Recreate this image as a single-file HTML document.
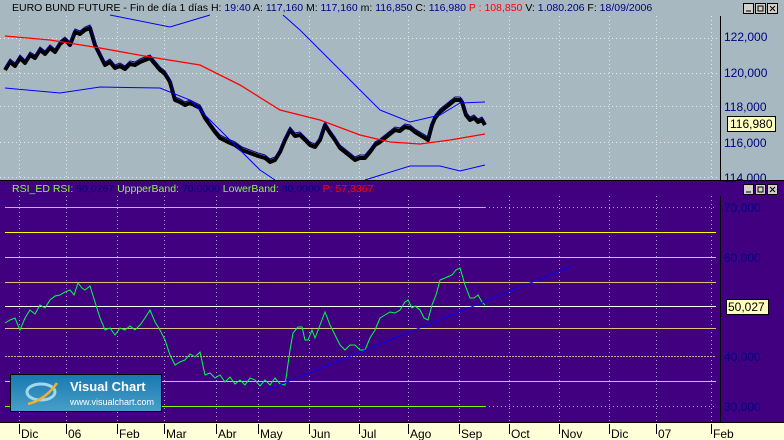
<!DOCTYPE html><html><head><style>
body{margin:0;width:784px;height:440px;overflow:hidden;font-family:"Liberation Sans",sans-serif;background:#a8b8c0}
</style></head><body>
<svg width="784" height="440" xmlns="http://www.w3.org/2000/svg" style="position:absolute;left:0;top:0;font-family:'Liberation Sans',sans-serif">
<rect x="0" y="0" width="784" height="181" fill="#a8b8c0"/>
<rect x="0" y="181" width="784" height="241" fill="#400080"/>
<rect x="0" y="422" width="784" height="18" fill="#ffffd8"/>
<line x1="720.5" y1="16" x2="720.5" y2="181" stroke="#000"/>
<line x1="720.5" y1="196" x2="720.5" y2="422" stroke="#000"/>
<line x1="0" y1="180.5" x2="784" y2="180.5" stroke="#000"/>
<line x1="0" y1="422.5" x2="784" y2="422.5" stroke="#000"/>
<g stroke="#e8e8e8" stroke-dasharray="1,3" stroke-width="1">
<path d="M19.5 16V180M66.5 16V180M117.5 16V180M164.5 16V180M216.5 16V180M258.5 16V180M309.5 16V180M359.5 16V180M408.5 16V180M459.5 16V180M509.5 16V180M559.5 16V180M609.5 16V180M656.5 16V180M711.5 16V180"/>
<path d="M0 38.5H720M0 73.5H720M0 106.5H720M0 142.5H720M0 177.5H720"/>
</g>
<g stroke="#c8c0ff" stroke-dasharray="1,3" stroke-width="1" opacity=".8">
<path d="M19.5 196V422M66.5 196V422M117.5 196V422M164.5 196V422M216.5 196V422M258.5 196V422M309.5 196V422M359.5 196V422M408.5 196V422M459.5 196V422M509.5 196V422M559.5 196V422M609.5 196V422M656.5 196V422M711.5 196V422"/>
<path d="M485 207.5H716M485 406.5H716"/>
</g>
<path d="M5 207.5H485M5 406.5H485" stroke="#80ff00"/>
<path d="M5 232.5H716" stroke="#ffff00"/>
<path d="M5 257.5H716" stroke="#d8c890"/>
<path d="M5 282.5H716M5 328.5H716M5 381.5H716" stroke="#e0c080"/>
<path d="M5 306.5H716" stroke="#ffffff"/>
<path d="M5 356.5H716" stroke="#c0b0a0" stroke-dasharray="2,1"/>
<!-- price -->
<polyline fill="none" stroke="#000" stroke-width="4" stroke-linejoin="round" points="5,70 10,62 15,66 20,58 25,63 30,55 35,58 40,50 45,54 50,48 55,52 60,44 65,40 70,45 75,32 80,34 85,30 90,28 95,45 100,55 105,65 110,62 115,68 120,66 125,69 130,64 135,65 140,62 145,60 150,58 155,64 160,70 165,74 170,82 175,100 180,102 185,105 190,103 200,108 205,118 210,125 215,132 220,138 228,142 235,145 242,150 250,153 258,156 265,158 270,162 275,160 280,152 285,140 290,130 295,136 300,135 305,140 310,145 315,147 320,140 325,125 330,133 335,140 340,148 345,152 350,156 355,160 360,158 365,158 370,152 375,145 380,142 385,138 390,134 395,130 400,131 405,127 410,128 415,132 420,135 425,138 428,140 432,125 435,118 440,112 445,108 450,104 455,100 460,100 462,102 466,115 470,120 474,118 478,122 482,120 485,125"/>
<polyline fill="none" stroke="#000080" stroke-width="1" points="5,67 10,59 15,63 20,55 25,60 30,52 35,55 40,47 45,51 50,45 55,49 60,41 65,37 70,42 75,29 80,31 85,27 90,25 95,42 100,52 105,62 110,59 115,65 120,63 125,66 130,61 135,62 140,59 145,57 150,55 155,61 160,67 165,71 170,79 175,97 180,99 185,102 190,100 200,105 205,115 210,122 215,129 220,135 228,139 235,142 242,147 250,150 258,153 265,155 270,159 275,157 280,149 285,137 290,127 295,133 300,132 305,137 310,142 315,144 320,137 325,122 330,130 335,137 340,145 345,149 350,153 355,157 360,155 365,155 370,149 375,142 380,139 385,135 390,131 395,127 400,128 405,124 410,125 415,129 420,132 425,135 428,137 432,122 435,115 440,109 445,105 450,101 455,97 460,97 462,99 466,112 470,117 474,115 478,119 482,117 485,122"/>
<polyline fill="none" stroke="#ff0000" stroke-width="1.3" points="5,36 50,40 100,48 150,57 200,65 240,85 280,110 320,120 360,135 390,142 420,144 450,140 485,134"/>
<g fill="none" stroke="#0000ff" stroke-width="1">
<polyline points="110,15 170,27 210,15"/>
<polyline points="283,15 300,30 330,60 360,90 380,110 410,122 440,115 460,103 485,102"/>
<polyline points="5,88 60,93 100,87 160,88 190,100 220,130 260,170 275,180"/>
<polyline points="365,180 410,166 440,166 460,171 485,165"/>
</g>
<!-- RSI -->
<polyline fill="none" stroke="#00ff40" stroke-width="1" points="5,323 10,320 15,318 20,330 25,318 30,310 35,314 40,305 45,308 50,300 55,296 60,295 65,292 70,290 74,295 78,283 82,288 85,290 90,286 95,302 100,318 105,330 110,328 115,335 120,328 125,330 130,326 135,330 140,325 145,318 150,310 155,322 160,330 165,340 170,355 175,365 180,362 185,360 190,354 195,357 200,352 205,375 210,373 215,378 220,375 225,382 230,377 235,384 240,380 245,385 250,378 255,380 260,386 265,380 270,385 275,378 280,384 285,385 290,350 293,333 298,327 302,327 305,340 308,340 312,330 315,338 320,325 325,312 330,325 335,335 340,345 345,350 350,345 355,345 360,350 365,350 370,338 375,330 380,318 385,315 390,312 395,313 400,310 405,302 408,300 412,308 415,306 420,310 424,318 428,320 432,305 436,295 440,280 445,278 452,275 456,270 460,268 465,285 470,298 474,298 478,295 482,302 485,305"/>
<line x1="267" y1="390" x2="572" y2="266" stroke="#0000ff" stroke-width="1"/>
<!-- axis labels -->
<g font-size="12" fill="#000080">
<text x="724" y="41">122,000</text><text x="724" y="77">120,000</text><text x="724" y="111">118,000</text><text x="724" y="147">116,000</text><text x="724" y="182">114,000</text>
</g>
<g font-size="12" fill="#000080">
<text x="724" y="212">70,000</text><text x="724" y="262">60,000</text><text x="724" y="361">40,000</text><text x="724" y="411">30,000</text>
</g>
<rect x="727.5" y="116.5" width="48" height="15" fill="#ffffc0" stroke="#000"/>
<text x="730" y="128" font-size="12" fill="#000">116,980</text>
<rect x="726.5" y="299.5" width="42" height="15" fill="#ffffc0" stroke="#000"/>
<text x="728" y="311" font-size="12" fill="#000">50,027</text>
<!-- title -->
<text x="12" y="11" font-size="10.5" fill="#000">EURO BUND FUTURE - Fin de día 1 días <tspan>H: </tspan><tspan fill="#000080">19:40</tspan>  A: <tspan fill="#000080">117,160</tspan>  M: <tspan fill="#000080">117,160</tspan>  m: <tspan fill="#000080">116,850</tspan>  C: <tspan fill="#000080">116,980</tspan>  <tspan fill="#ff0000">P : 108,850</tspan>  V: <tspan fill="#000080">1.080.206</tspan>  F: <tspan fill="#000080">18/09/2006</tspan></text>
<text x="12" y="192" font-size="10.5" fill="#80ff40">RSI_ED RSI: <tspan fill="#000080">50,0267</tspan>  UppperBand: <tspan fill="#000080">70,0000</tspan>  LowerBand: <tspan fill="#000080">30,0000</tspan>  <tspan fill="#ff0000">P: 57,3367</tspan></text>
<!-- window buttons -->
<g stroke="#000" fill="#d4d0c8"><rect x="743.5" y="3.5" width="10" height="10"/><rect x="755.5" y="3.5" width="10" height="10"/><rect x="767.5" y="3.5" width="10" height="10"/>
<rect x="743.5" y="184.5" width="10" height="10"/><rect x="755.5" y="184.5" width="10" height="10"/><rect x="767.5" y="184.5" width="10" height="10"/></g>
<g stroke="#000" fill="none"><path d="M746 11H751M758 6H763V11H758ZM770 6L775 11M775 6L770 11M746 192H751M758 187H763V192H758ZM770 187L775 192M775 187L770 192"/></g>
<!-- x axis -->
<g stroke="#000"><path d="M19.5 424V434M66.5 424V434M117.5 424V434M164.5 424V434M216.5 424V434M258.5 424V434M309.5 424V434M359.5 424V434M408.5 424V434M459.5 424V434M509.5 424V434M559.5 424V434M609.5 424V434M656.5 424V434M711.5 424V434"/></g>
<g font-size="12" fill="#000">
<text x="21" y="438">Dic</text><text x="68" y="438">06</text><text x="119" y="438">Feb</text><text x="166" y="438">Mar</text><text x="218" y="438">Abr</text><text x="260" y="438">May</text><text x="311" y="438">Jun</text><text x="361" y="438">Jul</text><text x="410" y="438">Ago</text><text x="461" y="438">Sep</text><text x="511" y="438">Oct</text><text x="561" y="438">Nov</text><text x="611" y="438">Dic</text><text x="658" y="438">07</text><text x="713" y="438">Feb</text>
</g>
<!-- logo -->
<defs><linearGradient id="g" x1="0" y1="0" x2="0" y2="1"><stop offset="0" stop-color="#1878b0"/><stop offset="1" stop-color="#48a0c8"/></linearGradient></defs>
<rect x="10.5" y="374.5" width="151" height="37" fill="url(#g)" stroke="#000"/>
<ellipse cx="41" cy="392" rx="14" ry="8" fill="none" stroke="#a0d8f0" stroke-width="3"/>
<path d="M28 404Q45 400 57 383" stroke="#f0b030" stroke-width="2.5" fill="none"/>
<text x="70" y="391" font-size="13" font-weight="bold" fill="#fff">Visual Chart</text>
<text x="70" y="405" font-size="9" fill="#fff">www.visualchart.com</text>
</svg>
</body></html>
